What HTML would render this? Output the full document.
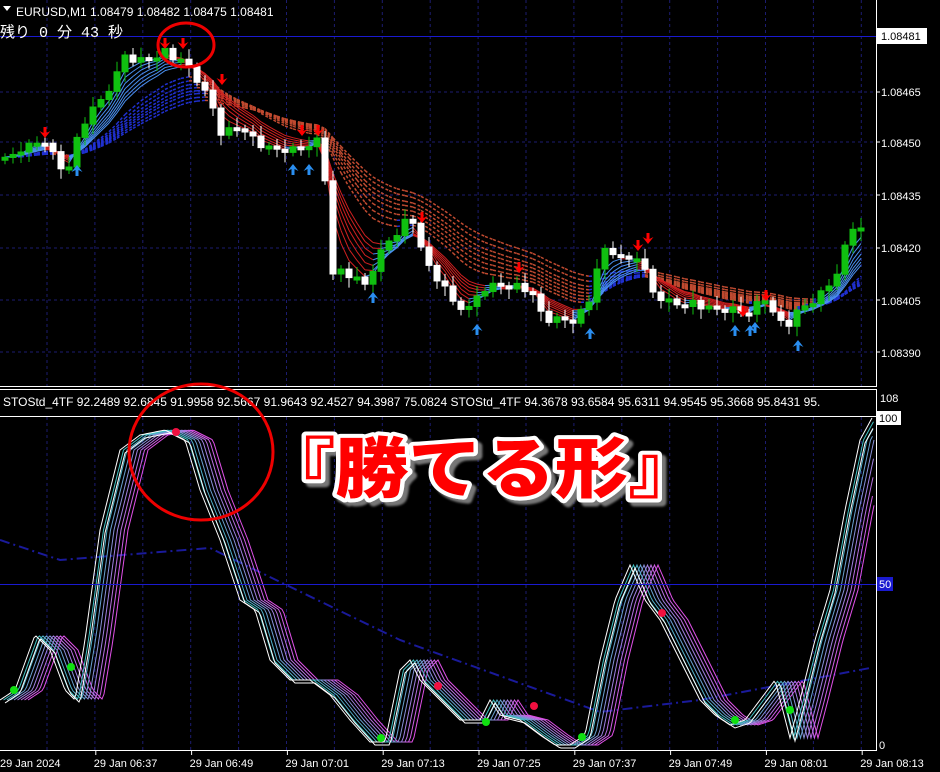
<!DOCTYPE html>
<html><head><meta charset="utf-8">
<style>
html,body{margin:0;padding:0;background:#000;}
body{width:940px;height:772px;overflow:hidden;position:relative;font-family:"Liberation Sans",Tahoma,sans-serif;}
svg{position:absolute;left:0;top:0;}
</style></head><body>
<svg id="s" width="940" height="772" viewBox="0 0 940 772" xmlns="http://www.w3.org/2000/svg">
<rect width="940" height="772" fill="#000"/>
<g id="grid"></g>
<g id="fan"></g>
<g id="candles"></g>
<g id="arrows"></g>
<g id="stoch"></g>
<line x1="876.5" y1="0" x2="876.5" y2="387" stroke="#fff"/>
<line x1="0" y1="386.5" x2="877" y2="386.5" stroke="#fff"/>
<line x1="0" y1="389.5" x2="877" y2="389.5" stroke="#fff"/>
<line x1="0" y1="416.5" x2="877" y2="416.5" stroke="#fff"/>
<line x1="876.5" y1="389" x2="876.5" y2="751" stroke="#fff"/>
<line x1="0" y1="750.5" x2="877" y2="750.5" stroke="#fff"/>
<line x1="0" y1="36.5" x2="876" y2="36.5" stroke="#1a1ad0"/>
<line x1="0" y1="584.5" x2="876" y2="584.5" stroke="#1a1ad0"/>
<g font-size="12" fill="#fff">
<text x="16" y="16">EURUSD,M1  1.08479 1.08482 1.08475 1.08481</text>
<text x="3" y="406">STOStd_4TF 92.2489 92.6845 91.9958 92.5667 91.9643 92.4527 94.3987 75.0824  STOStd_4TF 94.3678 93.6584 95.6311 94.9545 95.3668 95.8431 95.</text>
</g>
<path d="M3 6 L11 6 L7 11 Z" fill="#fff"/>
<text x="0" y="37" font-size="15" fill="#fff" font-family="'Liberation Mono','Noto Sans CJK JP',monospace">残り 0 分 43 秒</text>
<g font-size="11" fill="#fff">
<rect x="877" y="28" width="50" height="16" fill="#fff"/>
<text x="881" y="40" fill="#000">1.08481</text>
<text x="881" y="96">1.08465</text>
<text x="881" y="147">1.08450</text>
<text x="881" y="200">1.08435</text>
<text x="881" y="252">1.08420</text>
<text x="881" y="305">1.08405</text>
<text x="881" y="357">1.08390</text>
<text x="880" y="402">108</text>
<rect x="877" y="411" width="24" height="14" fill="#fff"/>
<text x="879" y="422" fill="#000">100</text>
<rect x="877" y="577" width="16" height="14" fill="#1a1ad0"/>
<text x="879" y="588">50</text>
<text x="879" y="749">0</text>
</g>
<g stroke="#fff" fill="none"><line x1="876" y1="92" x2="880" y2="92"/><line x1="876" y1="142" x2="880" y2="142"/><line x1="876" y1="195" x2="880" y2="195"/><line x1="876" y1="248" x2="880" y2="248"/><line x1="876" y1="300" x2="880" y2="300"/><line x1="876" y1="352" x2="880" y2="352"/></g>
<g id="xaxis" font-size="11" fill="#fff"></g>
<ellipse cx="186" cy="45" rx="28" ry="22" fill="none" stroke="#e00" stroke-width="3"/>
<ellipse cx="201" cy="452" rx="72" ry="68" fill="none" stroke="#e00" stroke-width="3"/>
<defs><filter id="sh" x="-10%" y="-20%" width="130%" height="150%"><feDropShadow dx="4" dy="4" stdDeviation="1" flood-color="#777" flood-opacity="1"/></filter></defs>
<g transform="translate(262,0) scale(1.11,1)">
<text x="0" y="492" font-size="66" font-weight="900" font-family="'Noto Sans CJK JP',sans-serif" fill="#f00" stroke="#fff" stroke-width="8" stroke-linejoin="round" paint-order="stroke" filter="url(#sh)">『勝てる形』</text>
</g>
</svg>
<script>
(function(){
var NS="http://www.w3.org/2000/svg";
function el(p,t,a){var e=document.createElementNS(NS,t);for(var k in a)e.setAttribute(k,a[k]);document.getElementById(p).appendChild(e);return e;}
for(var x=47;x<876;x+=47.9){el("grid","line",{x1:x,y1:0,x2:x,y2:386,stroke:"#1c1c70","stroke-dasharray":"3 3"});el("grid","line",{x1:x,y1:417,x2:x,y2:750,stroke:"#1c1c70","stroke-dasharray":"3 3"});}
[92,142,195,248,300,352].forEach(function(y){el("grid","line",{x1:0,y1:y,x2:876,y2:y,stroke:"#1c1c70","stroke-dasharray":"3 3"});});
var labs=["29 Jan 2024","29 Jan 06:37","29 Jan 06:49","29 Jan 07:01","29 Jan 07:13","29 Jan 07:25","29 Jan 07:37","29 Jan 07:49","29 Jan 08:01","29 Jan 08:13"];
for(var i=0;i<10;i++){var tx=i*95.8;if(i)el("xaxis","line",{x1:tx,y1:750,x2:tx,y2:755,stroke:"#fff"});var t=el("xaxis","text",{x:(i==0?0:tx-2),y:767});t.textContent=labs[i];}
var K=[[0,165],[20,150],[45,140],[65,175],[80,130],[90,115],[105,95],[115,80],[125,55],[135,60],[145,60],[155,55],[165,50],[175,60],[190,68],[200,85],[212,105],[222,135],[232,128],[245,128],[255,140],[265,150],[280,150],[295,150],[305,145],[318,140],[325,180],[330,270],[340,270],[355,280],[365,285],[375,265],[385,245],[395,235],[410,215],[420,240],[430,270],[445,290],[455,305],[470,310],[480,290],[495,285],[510,285],[520,285],[535,300],[545,320],[560,320],[575,320],[590,300],[600,250],[610,250],[620,260],[630,260],[640,255],[650,290],[665,300],[680,305],[690,300],[705,310],[720,310],[735,310],[745,315],[755,305],[765,300],[775,310],[785,330],[800,310],[815,300],[830,285],[840,265],[850,230],[860,225],[870,215]];
function interp(K,x){for(var i=1;i<K.length;i++){if(x<=K[i][0]){var a=K[i-1],b=K[i];return a[1]+(b[1]-a[1])*(x-a[0])/(b[0]-a[0]);}}return K[K.length-1][1];}
var N=108,cl=[],xs=[];
for(var i=0;i<N;i++){var x=5+i*8;xs.push(x);cl.push(interp(K,x)+((i*37)%11-5)*0.8);}
function ema(p){var r=[],e=cl[0],a=2/(p+1);for(var i=0;i<N;i++){e=e+a*(cl[i]-e);r.push(e);}return r;}
function drawEma(p,dash,w){var e=ema(p);for(var i=1;i<N;i++){var up=cl[i]<e[i];var c=dash?(up?"#2030d0":"#c04a30"):(up?"#4a90f0":"#d02020");el("fan","line",{x1:xs[i-1],y1:e[i-1],x2:xs[i],y2:e[i],stroke:c,"stroke-width":w,"stroke-dasharray":dash?"3 2":"none"});}}
[14,16,18,20,22,24,27,30].forEach(function(p){drawEma(p,true,1.5);});
[3,4,5,6,7,8,9].forEach(function(p){drawEma(p,false,1);});
for(var i=0;i<N;i++){var o=i?cl[i-1]:cl[0]+3,c=cl[i],bt=Math.min(o,c),bb=Math.max(o,c);if(bb-bt<3){bb=bt+3;}var up=c<o;var col=up?"#10c010":"#fff";
el("candles","line",{x1:xs[i],y1:bt-4-(i%3)*3,x2:xs[i],y2:bb+4+(i%4)*2,stroke:col});
el("candles","rect",{x:xs[i]-3,y:bt,width:6,height:bb-bt,fill:col,stroke:col});}
function down(x,y){el("arrows","path",{d:"M"+(x-1.5)+" "+(y-10)+"h3v6l4-2 -5.5 7 -5.5-7 4 2z",fill:"#f00"});}
function upA(x,y){el("arrows","path",{d:"M"+(x-1.5)+" "+(y+10)+"h3v-6l4 2 -5.5-7 -5.5 7 4-2z",fill:"#2a8ef0"});}
[[45,137],[165,48],[183,48],[222,84],[302,135],[318,135],[422,222],[519,272],[638,250],[648,243],[743,316],[766,300]].forEach(function(a){down(a[0],a[1]);});
[[77,166],[293,165],[309,165],[373,293],[477,325],[590,329],[735,326],[750,326],[798,341],[755,323]].forEach(function(a){upA(a[0],a[1]);});
var S=[[0,700],[15,690],[35,635],[50,650],[65,690],[75,700],[85,640],[100,530],[120,450],[140,435],[165,430],[185,440],[200,490],[220,540],[240,600],[255,610],[270,660],[290,680],[310,680],[330,695],[350,720],[370,742],[385,742],[400,670],[410,660],[420,680],[440,700],[460,720],[480,720],[490,700],[500,715],[520,720],[540,735],[555,745],[570,745],[585,735],[600,660],[615,600],[630,565],[645,600],[660,620],[680,660],[700,700],[715,715],[730,725],[745,720],[760,700],[775,680],[790,738],[800,700],[815,640],[830,590],[845,510],[860,440],[872,418]];
var sv=[];for(var x=0;x<=872;x+=2)sv.push([x,interp(S,x)]);
el("stoch","path",{d:"M0 540 L60 560 L210 548 L400 640 L600 712 L700 700 L870 668",stroke:"#1a1a9a","stroke-width":2,fill:"none","stroke-dasharray":"10 4 2 4"});
var cols=["#40c0c0","#50b0c8","#6aa0d0","#8890d8","#a080e0","#b870e0","#d060e8","#e050e8"];
for(var k=7;k>=0;k--){var sh=(k+1)*3.5,d="";for(var j=0;j<sv.length;j++){var xx=sv[j][0]+sh;if(xx>874)break;d+=(j?"L":"M")+xx+" "+interp(S,sv[j][0]).toFixed(1);}el("stoch","path",{d:d,stroke:cols[k],fill:"none","stroke-width":1});}
var d2="";sv.forEach(function(p,j){d2+=(j?"L":"M")+p[0]+" "+p[1];});
el("stoch","path",{d:d2,stroke:"#fff",fill:"none","stroke-width":1});
var d3="";sv.forEach(function(p,j){if(p[0]+5<875)d3+=(j?"L":"M")+(p[0]+5)+" "+(p[1]+3);});
el("stoch","path",{d:d3,stroke:"#fff",fill:"none","stroke-width":1});
[[14,690],[71,667],[381,738],[486,722],[582,737],[735,720],[790,710]].forEach(function(p){el("stoch","circle",{cx:p[0],cy:p[1],r:4,fill:"#10e010"});});
[[176,432],[438,686],[534,706],[662,613]].forEach(function(p){el("stoch","circle",{cx:p[0],cy:p[1],r:4,fill:"#f01040"});});
})();
</script>
</body></html>
